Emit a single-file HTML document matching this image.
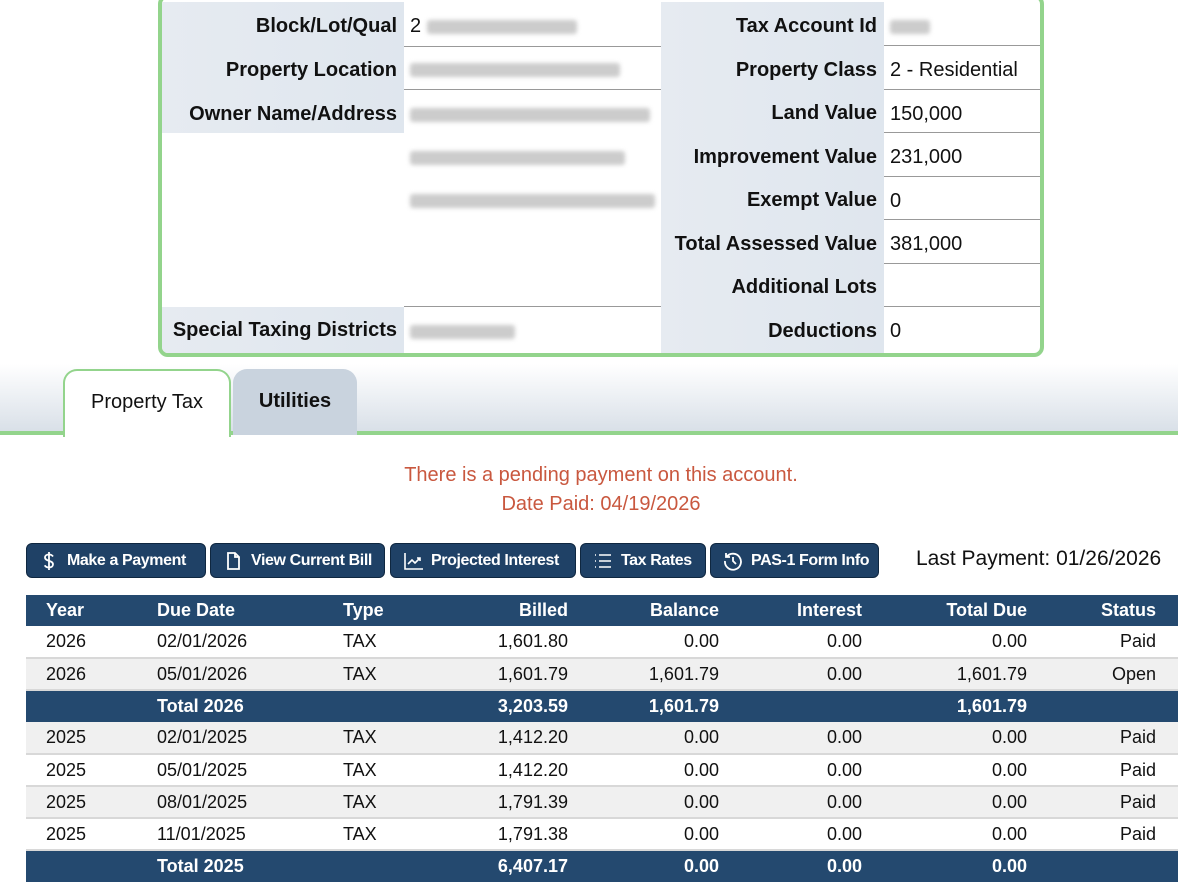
<!DOCTYPE html>
<html><head><meta charset="utf-8"><style>
*{box-sizing:border-box;margin:0;padding:0}
body{width:1178px;height:878px;overflow:hidden;background:#fff;font-family:"Liberation Sans",sans-serif;color:#111;position:relative}
.box{position:absolute;left:158px;top:-6px;width:886px;height:363px;border:4px solid #93d48c;border-radius:10px;background:#fff;overflow:hidden}
.c{position:absolute;font-size:20px;line-height:49px;white-space:nowrap}
.lab{text-align:right;padding-right:7px;font-weight:bold;background:linear-gradient(90deg,#e6ebf1,#dfe6ee)}
.val{padding-left:6px;border-bottom:1px solid #999}
.blur{display:inline-block;height:14px;background:#ccc;filter:blur(2px);vertical-align:middle;border-radius:3px}
.tabs{position:absolute;left:0;top:364px;width:1178px;height:71px;background:linear-gradient(#fff,#d9e0e8);border-bottom:4px solid #93d48c}
.tab{position:absolute;top:5px;height:66px;border-radius:14px 14px 0 0;font-size:20px;text-align:center;line-height:62px}
.msg{position:absolute;left:0;width:1202px;text-align:center;color:#c9583f;font-size:20px}
.btn{position:absolute;top:543px;height:35px;background:#1f4166;border:1px solid #0f2740;border-radius:6px;color:#fff;font-weight:bold;font-size:16px;line-height:33px;padding-left:40px;letter-spacing:-0.4px;white-space:nowrap}
.btn svg{position:absolute;left:12px;top:7px}
table{position:absolute;left:26px;top:595px;width:1152px;border-collapse:collapse;font-size:18px}
td,th{height:32px;padding:0;white-space:nowrap}
th{background:#24496f;color:#fff;height:31px;font-size:18px}
tr.t td{background:#24496f;color:#fff;font-weight:bold;border:none}
tr.g td{background:#f0f0f0}
td{border-bottom:2px solid #d8d8d8}
.r{text-align:right}.l{text-align:left}
</style></head><body>
<div class="box">
 <div class="c lab" style="left:0;top:4px;width:242px;height:44px">Block/Lot/Qual</div>
 <div class="c lab" style="left:0;top:48px;width:242px;height:44px">Property Location</div>
 <div class="c lab" style="left:0;top:92px;width:242px;height:43px">Owner Name/Address</div>
 <div class="c lab" style="left:0;top:309px;width:242px;height:50px;line-height:46px">Special Taxing Districts</div>
 <div class="c val" style="left:242px;top:4px;width:257px;height:45px">2 <span class="blur" style="width:150px"></span></div>
 <div class="c val" style="left:242px;top:49px;width:257px;height:43px;line-height:45px"><span class="blur" style="width:210px"></span></div>
 <div class="c val" style="left:242px;top:92px;width:257px;height:217px;line-height:43px;padding-top:3px"><span class="blur" style="width:240px"></span><br><span class="blur" style="width:215px"></span><br><span class="blur" style="width:245px"></span></div>
 <div class="c" style="left:242px;top:310px;padding-left:6px;line-height:46px"><span class="blur" style="width:105px"></span></div>
 <div class="c lab" style="left:499px;top:4px;width:223px;height:355px;line-height:43.5px;padding-top:3px">Tax Account Id<br>Property Class<br>Land Value<br>Improvement Value<br>Exempt Value<br>Total Assessed Value<br>Additional Lots<br>Deductions</div>
 <div class="c val" style="left:722px;top:4px;width:160px;height:44px"><span class="blur" style="width:40px"></span></div>
 <div class="c val" style="left:722px;top:48px;width:160px;height:44px;line-height:48px">2 - Residential</div>
 <div class="c val" style="left:722px;top:92px;width:160px;height:43px;line-height:48px">150,000</div>
 <div class="c val" style="left:722px;top:135px;width:160px;height:44px;line-height:48px">231,000</div>
 <div class="c val" style="left:722px;top:179px;width:160px;height:43px;line-height:48px">0</div>
 <div class="c val" style="left:722px;top:222px;width:160px;height:44px;line-height:48px">381,000</div>
 <div class="c val" style="left:722px;top:266px;width:160px;height:43px"></div>
 <div class="c" style="left:722px;top:309px;width:160px;padding-left:6px;line-height:48px">0</div>
</div>
<div class="tabs">
 <div class="tab" style="left:63px;width:168px;background:#fff;border:2px solid #93d48c;border-bottom:none;height:68px">Property Tax</div>
 <div class="tab" style="left:233px;width:124px;background:#c9d3de;font-weight:bold;line-height:64px">Utilities</div>
</div>
<div class="msg" style="top:464px">There is a pending payment on this account.</div>
<div class="msg" style="top:493px">Date Paid: 04/19/2026</div>
<div class="btn" style="left:26px;width:180px"><svg width="20" height="20" viewBox="0 0 20 20" fill="none" stroke="#fff" stroke-width="1.8"><path d="M14 5.5C13 4 11.5 3.5 10 3.5 7.5 3.5 6 4.8 6 6.5 6 10.5 14 9 14 13.3 14 15.2 12.3 16.5 10 16.5 8 16.5 6.5 15.7 5.7 14.3M10 1v18"/></svg>Make a Payment</div>
<div class="btn" style="left:210px;width:175px"><svg width="20" height="20" viewBox="0 0 20 20" fill="none" stroke="#fff" stroke-width="1.8"><path d="M5 2h7l4 4v12H5z M12 2v4h4"/></svg>View Current Bill</div>
<div class="btn" style="left:390px;width:186px"><svg width="22" height="20" viewBox="0 0 22 20" fill="none" stroke="#fff" stroke-width="1.6"><path d="M2 2v16h18M5 13l4-4 3 3 5-5M14 7h3v3"/></svg>Projected Interest</div>
<div class="btn" style="left:580px;width:126px"><svg width="20" height="20" viewBox="0 0 20 20" fill="none" stroke="#fff" stroke-width="1.6"><path d="M2 4h1M2 10h1M2 16h1M6 4h12M6 10h12M6 16h12"/></svg>Tax Rates</div>
<div class="btn" style="left:710px;width:169px"><svg width="20" height="20" viewBox="0 0 20 20" fill="none" stroke="#fff" stroke-width="1.8"><path d="M3.5 6A8 8 0 1 1 2 10M3 2v4h4M10 6v4l3 3"/></svg>PAS-1 Form Info</div>
<div style="position:absolute;left:916px;top:547px;font-size:21px">Last Payment: 01/26/2026</div>
<table>
<tr><th class="l" style="padding-left:20px;width:131px">Year</th><th class="l" style="width:186px">Due Date</th><th class="l" style="width:80px">Type</th><th class="r" style="width:145px">Billed</th><th class="r" style="width:151px">Balance</th><th class="r" style="width:143px">Interest</th><th class="r" style="width:165px">Total Due</th><th class="r" style="padding-right:22px">Status</th></tr>
<tr><td style="padding-left:20px">2026</td><td>02/01/2026</td><td>TAX</td><td class="r">1,601.80</td><td class="r">0.00</td><td class="r">0.00</td><td class="r">0.00</td><td class="r" style="padding-right:22px">Paid</td></tr>
<tr class="g"><td style="padding-left:20px">2026</td><td>05/01/2026</td><td>TAX</td><td class="r">1,601.79</td><td class="r">1,601.79</td><td class="r">0.00</td><td class="r">1,601.79</td><td class="r" style="padding-right:22px">Open</td></tr>
<tr class="t"><td></td><td>Total 2026</td><td></td><td class="r">3,203.59</td><td class="r">1,601.79</td><td class="r"></td><td class="r">1,601.79</td><td></td></tr>
<tr class="g"><td style="padding-left:20px">2025</td><td>02/01/2025</td><td>TAX</td><td class="r">1,412.20</td><td class="r">0.00</td><td class="r">0.00</td><td class="r">0.00</td><td class="r" style="padding-right:22px">Paid</td></tr>
<tr><td style="padding-left:20px">2025</td><td>05/01/2025</td><td>TAX</td><td class="r">1,412.20</td><td class="r">0.00</td><td class="r">0.00</td><td class="r">0.00</td><td class="r" style="padding-right:22px">Paid</td></tr>
<tr class="g"><td style="padding-left:20px">2025</td><td>08/01/2025</td><td>TAX</td><td class="r">1,791.39</td><td class="r">0.00</td><td class="r">0.00</td><td class="r">0.00</td><td class="r" style="padding-right:22px">Paid</td></tr>
<tr><td style="padding-left:20px">2025</td><td>11/01/2025</td><td>TAX</td><td class="r">1,791.38</td><td class="r">0.00</td><td class="r">0.00</td><td class="r">0.00</td><td class="r" style="padding-right:22px">Paid</td></tr>
<tr class="t"><td></td><td>Total 2025</td><td></td><td class="r">6,407.17</td><td class="r">0.00</td><td class="r">0.00</td><td class="r">0.00</td><td></td></tr>
</table>
</body></html>
